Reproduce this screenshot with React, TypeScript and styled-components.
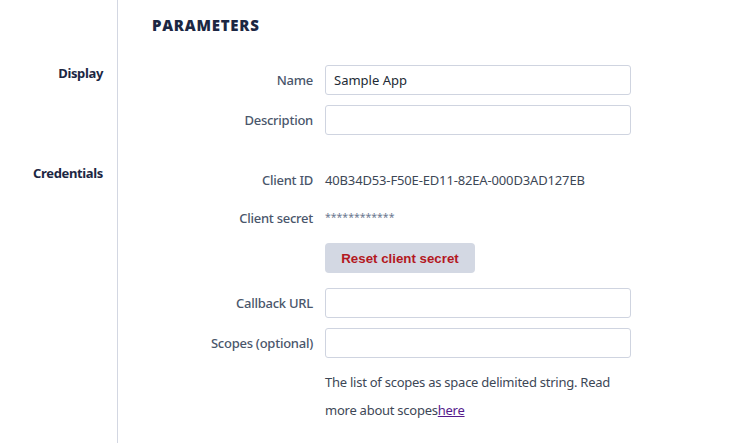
import React from "react";
import styled, { createGlobalStyle } from "styled-components";

const Global = createGlobalStyle`
  html, body { margin: 0; padding: 0; background: #ffffff; }
  body { font-family: "Noto Sans", "Open Sans", sans-serif; }
  #root { min-height: 100vh; }
`;

const Page = styled.div`
  display: grid;
  grid-template-columns: 118px 1fr;
  grid-template-rows: auto auto auto 1fr;
  min-height: 100vh;
`;

const Side = styled.div`
  border-right: 1px solid #d3d7e2;
  padding-right: 14px;
  text-align: right;
`;

const SideTitle = styled.div`
  font-size: 13px;
  font-weight: 700;
  line-height: 16px;
  color: #1c2743;
  letter-spacing: -0.35px;
`;

const Main = styled.div`
  padding-left: 34px;
`;

const Heading = styled.h2`
  margin: 0;
  padding-top: 15px;
  height: 65px;
  box-sizing: border-box;
  font-family: "Open Sans", "Noto Sans", sans-serif;
  font-size: 15px;
  font-weight: 800;
  line-height: 20px;
  color: #1c2743;
  letter-spacing: 0.75px;
`;

const Rows = styled.div<{ $pb?: number }>`
  display: flex;
  flex-direction: column;
  padding-bottom: ${(p) => p.$pb ?? 0}px;
`;

const Row = styled.div<{ $mt?: number }>`
  display: grid;
  grid-template-columns: 161px 306px;
  column-gap: 12px;
  align-items: center;
  min-height: 30px;
  margin-top: ${(p) => p.$mt ?? 0}px;
`;

const Label = styled.label`
  text-align: right;
  font-size: 13px;
  font-weight: 550;
  color: #4a566b;
  line-height: 18px;
  letter-spacing: -0.25px;
`;

const Input = styled.input`
  box-sizing: border-box;
  width: 306px;
  height: 30px;
  border: 1px solid #cfd4e0;
  border-radius: 3px;
  padding: 0 8px;
  font-family: "Noto Sans", sans-serif;
  font-size: 13px;
  color: #222a35;
  background: #fff;
  outline: none;
`;

const Value = styled.span`
  font-size: 13px;
  color: #3d4756;
  line-height: 18px;
  letter-spacing: -0.15px;
`;

const Secret = styled.span`
  font-size: 10.5px;
  color: #6b7890;
  line-height: 18px;
  position: relative;
  top: -1px;
`;

const Button = styled.button`
  box-sizing: border-box;
  width: 150px;
  height: 30px;
  border: none;
  border-radius: 4px;
  background: #d3d8e3;
  color: #b3191f;
  font-family: "Liberation Sans", Arial, sans-serif;
  font-size: 13.3px;
  font-weight: 700;
  padding: 0;
  cursor: pointer;
`;

const Help = styled.p`
  grid-column: 2;
  margin: 0;
  font-size: 13px;
  line-height: 28px;
  color: #3d4756;
  letter-spacing: -0.25px;
`;

const Link = styled.a`
  color: #551a8b;
  text-decoration: underline;
`;

export default function App() {
  return (
    <>
      <Global />
      <Page>
        <Side />
        <Main>
          <Heading>PARAMETERS</Heading>
        </Main>

        <Side>
          <SideTitle>Display</SideTitle>
        </Side>
        <Main>
          <Rows $pb={30}>
            <Row>
              <Label>Name</Label>
              <Input defaultValue="Sample App" />
            </Row>
            <Row $mt={10}>
              <Label>Description</Label>
              <Input />
            </Row>
          </Rows>
        </Main>

        <Side>
          <SideTitle>Credentials</SideTitle>
        </Side>
        <Main>
          <Rows>
            <Row>
              <Label>Client ID</Label>
              <Value>40B34D53-F50E-ED11-82EA-000D3AD127EB</Value>
            </Row>
            <Row $mt={8}>
              <Label>Client secret</Label>
              <Secret>************</Secret>
            </Row>
            <Row $mt={10}>
              <span />
              <div>
                <Button>Reset client secret</Button>
              </div>
            </Row>
            <Row $mt={15}>
              <Label>Callback URL</Label>
              <Input />
            </Row>
            <Row $mt={10}>
              <Label>Scopes (optional)</Label>
              <Input />
            </Row>
            <Row $mt={10}>
              <Help>
                The list of scopes as space delimited string. Read more about scopes
                <Link href="#">here</Link>
              </Help>
            </Row>
          </Rows>
        </Main>

        <Side />
        <Main />
      </Page>
    </>
  );
}
